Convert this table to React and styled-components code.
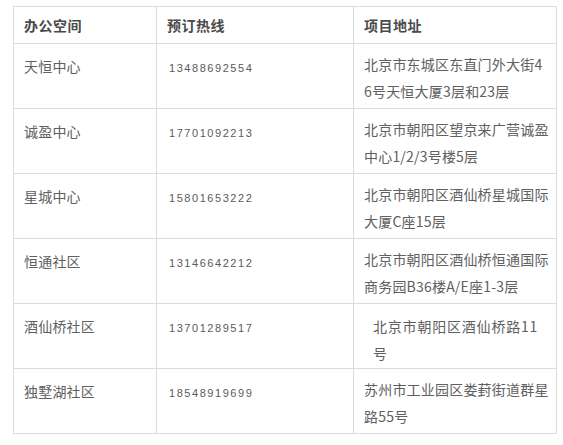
import React from "react";
import styled, { createGlobalStyle } from "styled-components";

const Global = createGlobalStyle`
  html, body { margin: 0; padding: 0; background: #fff; }
  body { font-family: "Noto Sans CJK SC", "Noto Sans", sans-serif; }
`;

const Page = styled.div`
  padding: 6px 0 0 13px;
`;

const Table = styled.table`
  border-collapse: collapse;
  table-layout: fixed;
  width: 544px;
  font-family: "Noto Sans CJK SC", "Noto Sans", sans-serif;
  font-size: 14px;
  color: #606060;
`;

const HeadCell = styled.th`
  border: 1px solid #dcdcdc;
  text-align: left;
  vertical-align: top;
  font-weight: bold;
  color: #4a4a4a;
  line-height: 27px;
  height: 27px;
  padding: 5px 10px 4px 10px;
  box-sizing: content-box;
  letter-spacing: 0.5px;
`;

const Row = styled.tr`
  height: 65px;
`;

const Cell = styled.td`
  border: 1px solid #dcdcdc;
  vertical-align: top;
  line-height: 27px;
  padding: ${(p) => (p.$indent ? "9px 10px 0 19px" : p.$address ? "7px 10px 0 10px" : "9px 10px 0 10px")};
  white-space: nowrap;
  letter-spacing: ${(p) => (p.$indent ? "0.8px" : "0.2px")};
`;

const Phone = styled.span`
  font-family: "Liberation Sans", Arial, sans-serif;
  font-size: 11px;
  letter-spacing: 1.55px;
  color: #5a5a5a;
  padding-left: 2px;
`;

const rows = [
  { name: "天恒中心", phone: "13488692554", addr: ["北京市东城区东直门外大街4", "6号天恒大厦3层和23层"] },
  { name: "诚盈中心", phone: "17701092213", addr: ["北京市朝阳区望京来广营诚盈", "中心1/2/3号楼5层"] },
  { name: "星城中心", phone: "15801653222", addr: ["北京市朝阳区酒仙桥星城国际", "大厦C座15层"] },
  { name: "恒通社区", phone: "13146642212", addr: ["北京市朝阳区酒仙桥恒通国际", "商务园B36楼A/E座1-3层"] },
  { name: "酒仙桥社区", phone: "13701289517", addr: ["北京市朝阳区酒仙桥路11", "号"], indent: true },
  { name: "独墅湖社区", phone: "18548919699", addr: ["苏州市工业园区娄葑街道群星", "路55号"] },
];

export default function App() {
  return (
    <>
      <Global />
      <Page>
        <Table>
          <colgroup>
            <col style={{ width: "143px" }} />
            <col style={{ width: "197px" }} />
            <col style={{ width: "203px" }} />
          </colgroup>
          <thead>
            <tr>
              <HeadCell>办公空间</HeadCell>
              <HeadCell>预订热线</HeadCell>
              <HeadCell>项目地址</HeadCell>
            </tr>
          </thead>
          <tbody>
            {rows.map((r) => (
              <Row key={r.name}>
                <Cell>{r.name}</Cell>
                <Cell>
                  <Phone>{r.phone}</Phone>
                </Cell>
                <Cell $address $indent={r.indent}>
                  {r.addr[0]}
                  <br />
                  {r.addr[1]}
                </Cell>
              </Row>
            ))}
          </tbody>
        </Table>
      </Page>
    </>
  );
}
